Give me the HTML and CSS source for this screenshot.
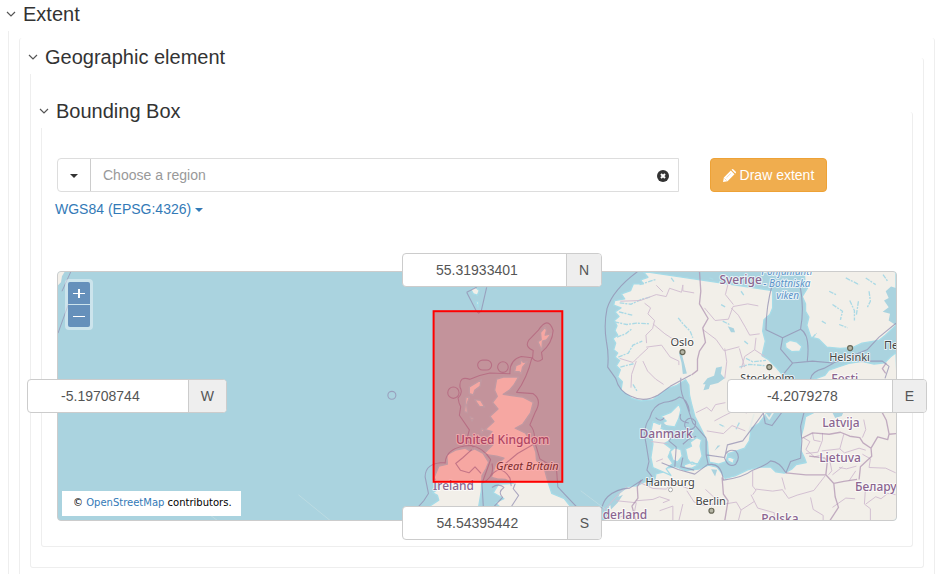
FILE: index.html
```
<!DOCTYPE html>
<html lang="en">
<head>
<meta charset="utf-8">
<title>Extent</title>
<link rel="stylesheet" href="styles.css">
</head>
<body>
<fieldset class="group group-root">
  <legend><svg class="chevron" viewBox="0 0 10 7"><path d="M1 1l4 4 4-4"/></svg>Extent</legend>
  <fieldset class="group group-plain">
    <fieldset class="group">
      <legend><svg class="chevron" viewBox="0 0 10 7"><path d="M1 1l4 4 4-4"/></svg>Geographic element</legend>
      <fieldset class="group group-box">
        <legend><svg class="chevron" viewBox="0 0 10 7"><path d="M1 1l4 4 4-4"/></svg>Bounding Box</legend>
        <div class="toolbar">
          <div class="region">
            <button type="button" class="region-toggle" aria-label="Regions"><span class="caret"></span></button>
            <input type="text" class="region-input" placeholder="Choose a region" aria-label="Region">
            <button type="button" class="region-clear" aria-label="Clear"><svg viewBox="0 0 12 12"><circle cx="6" cy="6" r="6"/><path d="M4 4l4 4M8 4l-4 4"/></svg></button>
          </div>
          <button type="button" class="draw"><svg viewBox="0 0 12 12"><path d="M0 12l.8-4.200 6.400-6.400 3.400 3.400L4.200 11.200zM7.900.700l.500-.500q.500-.400 1 0l2.400 2.400q.400.500 0 1l-.500.500z"/><path class="cut" d="M1.300 8.700l2 2M3.200 8l4-4"/></svg>Draw extent</button>
        </div>
        <a class="projection" href="#">WGS84 (EPSG:4326) <span class="caret"></span></a>
        <div class="map-wrap">
          <div class="map">
            <svg class="chart" viewBox="57 271 840 250" preserveAspectRatio="xMidYMid slice" role="img" aria-label="Map of northern Europe">
              <path class="ice" d="M57 271h7l-3 5-1 6-3 3z"/>
              <path class="coastal" d="M57 333l13-36M61 291l9-20"/>
              <!-- Scandinavia and the Baltic, drawn at three times the chart scale -->
              <g transform="translate(600 271) scale(.33333)">
                <g class="land">
                  <path d="M130 0l15 18-22 8 8 12-30 0-8 20-28 10 10 15-30 5-3 14 22 8-18 12 12 14-14 12 8 16-6 14 8 14-14 10 8 14-6 20 12 10-8 12 14 10-10 16 12 12-8 22 14 14-4 26 20 14 12 10 28 8 36-4 26-18 20-16 24-8 28-18 10 16 2 30 6 26 10 38 14 28 12 24 12 26 2 30 4 30 28 6 22-8 6-24 20-6 30-10 14-22 6-38 24-16 30-40 24-40 20-26-2-36-20-24-24-24-20-12 10-44-8-30 4-34 18-16 8-20 0-52z"/>
                  <path d="M615 0l2 28 8 22-16 26 10 22 0 22 10 18-6 24 12 36 24 6 24 24 40 4 36-2 30-14 50-8 20-16 32-30v-162z"/>
                  <path d="M558 216l14-8 20 4 16 14-6 14-24 2-18-12z"/>
                  <path d="M891 245l-16 12-18 18-32 4-36-8-40 6-36 12-24 8-12 16-34 12 0 100-24 12-6 32-8 30 0 40 10 20 6 16-30 6-14 14-22 12-26-4-14-14-36 0-34 8-38 18-30 8-10-16-14-18-26-6-30 12-40 4-30-12-20 4-22-8 8 20-24 6-4 24-30 0-24 12-26 2-26 20-8 20-24 18-12 48h895z"/>
                  <path d="M160 590l-6-30 6-40-6-38 6-30 20 8 20-10-16-14 30-12 24-24 6 16-6 26-12 26-28-4-14 8 24 10 10 12-8 16-16 8 22 16-10 24 14 20-20 16 14 20z"/>
                  <path d="M212 542l14-12 18 6 4 20-14 18-14-6zM258 534l18-8-4-12 20-14 14 6-4 20 6 30-12 22-20 2-12-16zM254 582l24-8 18 8-18 10-22 0zM385 556l20 8-4 14-16-8z"/>
                </g>
                <path class="land sliver" d="M446 490l18-60M500 430l10 14 12-20"/>
                <g class="water">
                  <path d="M310 340l14-18 20-8 6-24 18-4-4 22 12 14-20 14-24 6-4 12-16 4 6-18z"/>
                  <path d="M385 165l10 18 12 0-4-12zM860 60l16-14 15 4v112l-22-14 4-20-22-6 18-14-14-20 14-8zM700 425l34-4-6 14-20 6zM345 540l10-16 8 0zM186 450l18 16-20 4zM238 245l8 30 4 34 12-2-16-62z"/>
                  <path d="M30 690l40-18-16 24-20 20zM335 595l12 22 6-20zM150 630l-6 20 14-12z"/>
                </g>
                <g class="inlets">
                  <path d="M45 152l36 8 30-4 40 2M60 95l34 4 30-14 30-8M52 198l26-10 20-16M56 258l30-12 14-24 28-12M58 122l40 10M120 40l50-16M62 288l40-10M100 340l12 20M236 140l16 20 20 20 8 20M420 288l30-8 50 4M440 262l20 10 40-4M425 60l10 14M365 100l14 8M435 210l12 10M370 150l20 10M420 455l-10 20M360 460l16 8M215 20l10 14M330 20l12 4M700 100l30 20-6 26M752 88l14 30 0 30M778 90l-6 40M810 60l4 30-10 20M720 160l26 10M740 20l40 20M800 20l30 20M690 60l24 12M668 150l14 8M852 10l14 20M640 200l12-14"/>
                </g>
                <g class="province">
                  <path d="M62 90l60-2 48-18 30 6 10-25 36 12 4-22 0 18 34 6M190 62l-20-20M135 96l18 14-8 18 20 20-6 24-20 20 2 24M160 158l36 30 40 26M140 228l46-6 26 36 26 12 0 12M60 262l40 12 16-16 30-28M110 270l-14 40-2 40M130 270l14 30 24 24 24 16M315 110l32 38 40-4 14-38 44-8 32 6M388 30l-10 40 24 30M395 110l22 22 22 38 12 22 30-4M310 175l40 30 24 34 46-12M376 232l6 40-6 50M420 232l16 56M470 200l-4 36-30 20-10 36M466 236l30 20M290 425l32-16 14 12 12-20 30-6M345 450l26-14 36-18 36 8M322 480l50 8 26-24 40 16"/>
                  <path d="M170 572l20-8M155 512l46 6M12 720l50-56 20-16M50 690l60 6-6 30-46 14M120 635l40 18 40 2 20-20 50 20M110 690l50-4 20-8 30 10-20 8M180 720l40-14 0 44M262 660l22 34 30 10 40-6M250 700l-12 50M370 690l-30-14-22-20M375 700l36-6 14 24-8 32M425 718l40-26M460 600l0 46 10 12-10 14M455 672l20 40 50 14 0 24M470 655l50 6 28-4M548 620l10 36M548 655l20 28 26-10 50-14 34-44M634 680l8 36 30 18 0 16M612 500l20 12-12 24 26 22 24-6M620 548l36-4 14-36 0-22M640 486l4 22 20 4M668 540l54-6 12-44M722 534l14 12 44-14 20 6M690 560l8 40-10 12M720 590l22 4 30-8M700 612l30-24M770 600l-20 30M790 550l24 14-4 26 50 2 30 14M800 700l30-22 16 6 20-16 24 4M700 710l40-28 28 2M800 640l-4 60 18 14 0 34M790 500l10-24-6-30"/>
                </g>
                <g class="frontier">
                  <path d="M300 0l4 60-4 38 26 44-16 28 8 44-18 26-6 24 0 34-18 14M608 502l32-16 50 4 34-6 28 12 30 4 10 16 24 16 2 24-34 32-4 38M816 532l20-34 30 8 4-16 21-2M870 488l-8-40-14-26M560 606l60 6 60 0 4-36-6-14-48-6M680 612l24 26 30-6 40-6M704 638l4 40 10 32-26 40M368 620l4 50 14 20-10 60M125 628l-12 20 2 34-18 24 12 44M862 275l-12 18 10 14"/>
                </g>
                <g class="coastal">
                  <path d="M115 0Q40 55 22 112 12 160 20 210q8 40 4 78l24 34q10 40 46 54 40 20 82-4l36-26 62-34M244 320q-4 46 16 78l20 58 40 46M150 442q10-40 44-48 26-2 46-16 24 4 30 44M150 442q-22 28-10 80l8 50-6 26 16 20M2 750q0-50 22-72 26-24 66-26l40-26M320 502l0 50 55 8q6-28 34-20 16 18 0 40-22 14-34-20M320 552l6 28-40 30-50-14-50-20M326 582q38-10 46 46 60-8 88-30 40-14 54-28 26 2 46 36l14-34 30-10 4-52-4-44 10-40M376 560l8-38 46-12 30-40 32-44 6 32 20 6 30-40M244 430q-10 20 24 26M260 448q14-14 28 4 2 24-20 24-20-6-8-28z"/>
                  <path d="M520 36q-20 70-20 140l50 24-6 34 36 42 60-6 62 6 52-20 50-20 36-38 51-42M602 40q14 70 2 134l-54 26M604 174q30 16 20 98M580 276l-38 46M634 324q2-22 40-32l30-16M760 258l20 12 70 0 20 16-12 36"/>
                  <path d="M168 440q16 16 26 0M224 490l-16 20 22 18-4 60M250 520l16-14 24-10M250 560l-6 28 40 10"/>
                </g>
              </g>
              <!-- British Isles, drawn at three times the chart scale -->
              <g transform="translate(420 287) scale(.33333)">
                <g class="land">
                  <path d="M230 276l20-6 46 0-14 24-12 14-20 14 58 8 32 16-8 32-24 34-22 12 30 14 24 34 8 24 2 24 22 20 12 44 12 36 38 16 20 26h-212l-16-14 26-12-32-18 16-26 44-2-24-12-24-2-18-4 12-36 26-22-22-6-26-4-14-2 30-30-10-12-18 4 24-30-20-6 26-24-12-16 24-22-16-20 14-18-8-18z"/>
                  <path d="M148 300l36-22-4 20-16 12-4 14-12-4zM138 332l10-2-8 24 2 24-8-4zM164 338l18 2 12 20-16-2zM150 390l10 4-4 8zM184 424l8 6-8 8zM284 254l4-18 14-6 0-14 8 10 12-2-14 16-4 20-6-6zM354 164l10-6-2-22 14-16 4 10-4 14 18-4-14 18-12 4-2 28zM152 6l14-6 12 10-6 14-12-4zM168 44l8 0-2 16z"/>
                  <path d="M42 572l14-34 26-6-2-28 26-14 30-6 14 8 14-6 26 14 16 26-8 20-12 20-2 46-8 48h-150l30-20-4-14-14-8 20-14z"/>
                </g>
                <g class="coastal">
                  <path d="M150 277q30-14 60-19l60 2q-2-42 34-52l32 4q-14 60-46 104l50 4q28 18 6 56l-16 38q16 16 14 48l16 54 50 30 4 54 26 28 30 32M150 277q-34-12-30 24 10 16-6 32 2 16 8 26l-4 26 30 44-8 30 20 22M75 530q2-50 75-54 38 4 62 42-12 34-26 72l4 70M75 527q-60 0-60 43l10 50-14 22-16 18M155 488l-26 24-22 18 14 20 26 8 18-18 18 20M355 130q30-46 45 0-2 38-35 66l3 20q-16 14-30-2l2-24q-26-10-14-30zM140 15l30-15M200 0l-16 70-8 8-8-8-28-55M186 590q40-20 30-60M212 568q30-40 58 6l4 24M216 602q20-14 36 0-20 14-4 30l-26 28M286 590l-6 16 16 20-22 34M345 470l-52 30-36 30"/>
                  <circle cx="100" cy="317" r="17"/><circle cx="249" cy="240" r="16"/><rect x="173" y="219" width="42" height="30" rx="15"/><circle cx="-85" cy="325" r="12"/>
                </g>
              </g>
              <g class="names">
                <text x="720" y="284">Sverige</text><text x="640" y="438">Danmark</text><text x="823" y="427">Latvija</text><text x="820" y="462">Lietuva</text><text x="856" y="491">Беларусь</text><text x="762" y="523">Polska</text><text x="832" y="383">Eesti</text><text x="603" y="519">derland</text><text x="433" y="490">Ireland</text><text x="456" y="444">United Kingdom</text>
              </g>
              <g class="sea">
                <text x="762" y="275">Pohjanlahti</text><text x="764" y="287">- Bottniska</text><text x="777" y="299">viken</text>
              </g>
              <g class="cities">
                <circle cx="683" cy="352" r="2.500"/><circle cx="851" cy="348" r="2.500"/><circle cx="770" cy="367" r="2.500"/><circle class="minor" cx="671" cy="490" r="2"/><circle cx="712" cy="511" r="2.500"/>
                <text x="671" y="346">Oslo</text><text x="830" y="361">Helsinki</text><text x="741" y="382">Stockholm</text><text x="646" y="486">Hamburg</text><text x="696" y="505">Berlin</text><text x="885" y="349">Петербург</text>
              </g>
              <text class="island" x="496" y="470">Great Britain</text>
              <path class="route" d="M298 495l32 26M209 515l8 6M581 491l24 18"/>
              <rect class="extent" x="433.500" y="311" width="129" height="171"/>
            </svg>
            <div class="zoom">
              <button type="button" aria-label="Zoom in"><svg viewBox="0 0 12 12"><path d="M0 6.500h12"/><path class="stem" d="M6 2v9"/></svg></button>
              <button type="button" aria-label="Zoom out"><svg viewBox="0 0 12 12"><path d="M0 6.500h12"/></svg></button>
            </div>
            <p class="credit">© <a href="#">OpenStreetMap</a> contributors.</p>
          </div>
          <div class="coord north"><input type="text" id="north" value="55.31933401"><label for="north">N</label></div>
          <div class="coord west"><input type="text" id="west" value="-5.19708744"><label for="west">W</label></div>
          <div class="coord east"><input type="text" id="east" value="-4.2079278"><label for="east">E</label></div>
          <div class="coord south"><input type="text" id="south" value="54.54395442"><label for="south">S</label></div>
        </div>
      </fieldset>
    </fieldset>
  </fieldset>
</fieldset>
</body>
</html>
```
FILE: styles.css
```
* { box-sizing: border-box; }

body {
  margin: 0;
  overflow: hidden;
  background: #fff;
  color: #333;
  font: 14px/20px "Liberation Sans", Arial, sans-serif;
}

button, input { font: inherit; color: inherit; }

.group {
  min-width: 0;
  margin: 0;
  padding: 0 10px 20px;
  border: 1px solid #eee;
  border-top: 0;
  border-radius: 3px;
}

.group-root { margin: -2px -11px 0 8px; padding-bottom: 0; }
.group-plain { margin-top: 7px; padding-top: 3px; }
.group-box { margin-top: 21px; padding: 30px 15px 25px; }

legend {
  display: flex;
  align-items: center;
  gap: 7px;
  height: 33px;
  margin-left: -13px;
  padding: 0 2px 2px 0;
  background: #fff;
  font-size: 20px;
}
.group-box > legend { margin-left: -18px; }

.chevron {
  width: 10px;
  height: 7px;
  margin-top: 2px;
  fill: none;
  stroke: #555;
  stroke-width: 1.2;
}

.caret {
  display: inline-block;
  border: 4px solid transparent;
  border-top-color: currentColor;
  border-bottom: 0;
  vertical-align: middle;
}

.toolbar {
  display: grid;
  grid-template-columns: 74% auto;
  justify-content: start;
  gap: 31px;
}

.region {
  display: flex;
  height: 34px;
  border: 1px solid #ddd;
  border-radius: 4px 0 0 4px;
}
.region-toggle {
  width: 33px;
  padding: 0;
  border: 0;
  border-right: 1px solid #ccc;
  background: none;
}
.region-input {
  flex: 1;
  min-width: 0;
  padding: 0 12px;
  border: 0;
  background: none;
}
.region-input::placeholder { color: #999; }
.region-clear {
  width: 30px;
  padding: 0;
  border: 0;
  background: none;
}
.region-clear svg {
  display: block;
  width: 12px;
  height: 12px;
  margin: 1px auto 0;
  fill: #333;
  stroke: #fff;
}
.region-clear circle { stroke: none; }
.region-clear path { stroke-width: 2; }

.draw {
  display: flex;
  align-items: center;
  gap: 4px;
  height: 34px;
  padding: 0 12px;
  border: 1px solid #eea236;
  border-radius: 4px;
  background: #f0ad4e;
  color: #fff;
}
.draw svg { width: 13px; height: 13px; fill: #fff; }
.draw .cut { fill: none; stroke: #f0ad4e; stroke-width: 0.4; }

a { color: #337ab7; text-decoration: none; }

.projection {
  display: block;
  margin: 7px 0 52px -2px;
}

.map-wrap { position: relative; }

.map {
  position: relative;
  height: 250px;
  overflow: hidden;
  border: 1px solid #ccc;
  border-radius: 4px;
  background: #aad3df;
}

.chart { display: block; width: 100%; height: 100%; }
.ice { fill: #f2efe9; }
.land { fill: #f2efe9; stroke: #a6dbe7; stroke-width: 4; stroke-linejoin: round; }
.sliver { fill: none; stroke: #e6ece8; stroke-width: 5; }
.water { fill: #aad3df; }
.inlets { fill: none; stroke: #aad9e5; stroke-width: 4; stroke-dasharray: 14 3 6 4; }
.coastal { fill: none; stroke: #938fb2; stroke-opacity: 0.75; stroke-width: 3.3; stroke-linejoin: round; }
path.coastal { stroke-width: 1; }
.frontier { fill: none; stroke: #ad8eae; stroke-width: 4; stroke-opacity: 0.7; stroke-linejoin: round; }
.province { fill: none; stroke: #d3c0d2; stroke-width: 3; stroke-linejoin: round; }

.chart text {
  font: 11px "Noto Sans", sans-serif;
  paint-order: stroke;
  stroke: #fff;
  stroke-opacity: 0.7;
  stroke-width: 2;
  stroke-linejoin: round;
}
.chart .names text { fill: #8b6590; font-size: 12px; font-weight: 500; }
.chart .sea text { fill: #5c93c9; font-size: 10px; font-style: italic; }
.cities text { fill: #444; }
.cities circle { fill: #777; stroke: #666655; stroke-width: 1.2; }
.cities circle { fill: #b5b5a5; }
.cities .minor { fill: #fff; stroke: #999; stroke-width: 0.8; }
.chart .island { fill: #444; font-style: italic; }
.route { fill: none; stroke: #bcdbe2; }
.extent { fill: #ff0000; fill-opacity: 0.3; stroke: #ff0000; stroke-width: 2; }

.zoom {
  position: absolute;
  top: 7px;
  left: 7px;
  display: grid;
  gap: 1px;
  padding: 3px;
  border-radius: 4px;
  background: rgba(255, 255, 255, 0.4);
}
.zoom button {
  width: 22px;
  height: 22px;
  padding: 0;
  border: 0;
  border-radius: 2px 2px 0 0;
  background: #6590bb;
}
.zoom button + button { border-radius: 0 0 2px 2px; }
.zoom svg { display: block; width: 12px; height: 12px; margin: auto; stroke: #fff; stroke-width: 1; }
.zoom .stem { stroke-width: 2; }

.credit {
  position: absolute;
  left: 4px;
  bottom: 4px;
  margin: 0;
  padding: 0 9px 1px 11px;
  background: #fff;
  color: #000;
  font: 10px/24px "DejaVu Sans", sans-serif;
}

.coord {
  position: absolute;
  display: flex;
  width: 200px;
  height: 34px;
  border: 1px solid #ccc;
  border-radius: 4px;
  background: #fff;
  color: #555;
}
.coord input {
  flex: 1;
  min-width: 0;
  padding: 0 27px 0 12px;
  border: 0;
  background: none;
  text-align: center;
}
.coord label {
  padding: 0 12px;
  border-left: 1px solid #ccc;
  border-radius: 0 3px 3px 0;
  background: #eee;
  line-height: 32px;
}
.north { top: -18px; left: calc(50% - 75px); }
.south { bottom: -19px; left: calc(50% - 75px); }
.west { top: calc(50% - 17px); left: -30px; }
.east { top: calc(50% - 17px); right: -30px; }
```
